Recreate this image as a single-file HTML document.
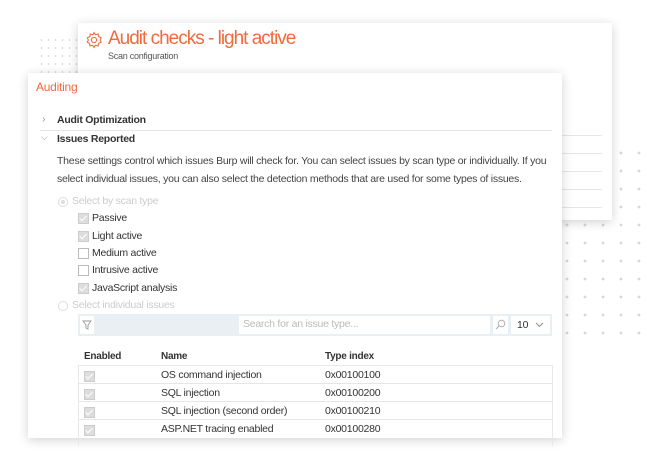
<!DOCTYPE html>
<html><head><style>
body{margin:0;width:653px;height:463px;background:#fff;position:relative;overflow:hidden;font-family:"Liberation Sans",sans-serif;color:#333}
.a{position:absolute}
.dots{position:absolute;background-image:radial-gradient(circle,#d8d8d8 1.2px,transparent 1.6px)}
.card{position:absolute;background:#fff;box-shadow:0 2px 10px rgba(0,0,0,.18)}
.t{position:absolute;font-size:10.5px;letter-spacing:-.25px;white-space:nowrap}
.cb{position:absolute;width:9px;height:9px;border:1px solid #bbb;background:#fff}
.cb.on{background:#ddd;border-color:#ccc}
.cb.on::after{content:"";position:absolute;left:2px;top:0px;width:3px;height:6px;border:solid #fff;border-width:0 1.5px 1.5px 0;transform:rotate(45deg)}
.hl{position:absolute;height:1px;background:#e6e6e6}
</style></head><body>
<div class="dots" style="left:38px;top:36px;width:40px;height:56px;background-size:7px 8px;background-image:radial-gradient(circle,#d4d4d4 .6px,transparent 1px)"></div>
<div class="dots" style="left:558px;top:144px;width:95px;height:195px;background-size:18px 18px"></div>
<div class="card" style="left:78px;top:23px;width:534px;height:197px">
 <svg class="a" style="left:7px;top:8px" width="18" height="18" viewBox="0 0 24 24" fill="none" stroke="#f06a3b" stroke-width="1.4"><circle cx="12" cy="12" r="3.5"/><path d="M12 2l2 3 3.5-1 .5 3.5 3.5 1.5-1.5 3 1.5 3-3.5 1.5-.5 3.5-3.5-1-2 3-2-3-3.5 1-.5-3.5L3 15l1.5-3L3 9l3.5-1.5L7 4l3.5 1z"/></svg>
 <div class="t" style="left:30px;top:5px;font-size:19px;color:#f06a3b;letter-spacing:-1px">Audit checks - light active</div>
 <div class="t" style="left:30px;top:28px;font-size:9px;color:#555">Scan configuration</div>
 <div class="hl" style="left:484px;width:40px;top:112px"></div>
 <div class="hl" style="left:484px;width:40px;top:130px"></div>
 <div class="hl" style="left:484px;width:40px;top:148px"></div>
 <div class="hl" style="left:484px;width:40px;top:166px"></div>
 <div class="hl" style="left:484px;width:40px;top:184px"></div>
</div>
<div class="card" style="left:28px;top:73px;width:534px;height:365px">
 <div class="t" style="left:8px;top:7px;font-size:12px;color:#f06a3b">Auditing</div>
 <div class="t" style="left:14px;top:40px;color:#999">›</div>
 <div class="t" style="left:29px;top:41px;font-weight:bold;color:#333">Audit Optimization</div>
 <div class="hl" style="left:12px;width:512px;top:57px"></div>
 <div class="t" style="left:13px;top:59px;color:#999;font-size:9px">⌵</div>
 <div class="t" style="left:29px;top:60px;font-weight:bold;color:#333">Issues Reported</div>
 <div class="t" style="left:29px;top:82px;color:#444">These settings control which issues Burp will check for. You can select issues by scan type or individually. If you</div>
 <div class="t" style="left:29px;top:100px;color:#444">select individual issues, you can also select the detection methods that are used for some types of issues.</div>
 <div class="a" style="left:30px;top:124px;width:8px;height:8px;border:1px solid #ddd;border-radius:50%"><div class="a" style="left:2px;top:2px;width:4px;height:4px;border-radius:50%;background:#ddd"></div></div>
 <div class="t" style="left:44px;top:122px;color:#ccc">Select by scan type</div>
 <div class="cb on" style="left:50px;top:140px"></div><div class="t" style="left:64px;top:139px">Passive</div>
 <div class="cb on" style="left:50px;top:158px"></div><div class="t" style="left:64px;top:157px">Light active</div>
 <div class="cb" style="left:50px;top:175px"></div><div class="t" style="left:64px;top:174px">Medium active</div>
 <div class="cb" style="left:50px;top:192px"></div><div class="t" style="left:64px;top:191px">Intrusive active</div>
 <div class="cb on" style="left:50px;top:210px"></div><div class="t" style="left:64px;top:209px">JavaScript analysis</div>
 <div class="a" style="left:30px;top:228px;width:8px;height:8px;border:1px solid #ddd;border-radius:50%"></div>
 <div class="t" style="left:44px;top:226px;color:#ccc">Select individual issues</div>
 <div class="a" style="left:50px;top:241px;width:474px;height:22px;background:#eaeff3"></div>
 <div class="a" style="left:52px;top:243px;width:14px;height:18px;background:#fff"></div>
 <svg class="a" style="left:54px;top:247px" width="10" height="10" viewBox="0 0 10 10" fill="none" stroke="#999" stroke-width="0.9"><path d="M1 1h8L6 5v4L4 8V5z"/></svg>
 <div class="a" style="left:211px;top:243px;width:251px;height:18px;background:#fff"></div>
 <div class="t" style="left:215px;top:245px;color:#bbb">Search for an issue type...</div>
 <div class="a" style="left:465px;top:243px;width:15px;height:18px;background:#fff"></div>
 <svg class="a" style="left:467px;top:246px" width="11" height="11" viewBox="0 0 11 11" fill="none" stroke="#aaa" stroke-width="0.9"><circle cx="6.5" cy="4.5" r="3.3"/><path d="M4.2 6.8L1 10"/></svg>
 <div class="a" style="left:483px;top:243px;width:39px;height:18px;background:#fff"></div>
 <div class="t" style="left:489px;top:246px">10</div>
 <svg class="a" style="left:507px;top:249px" width="9" height="6" viewBox="0 0 9 6" fill="none" stroke="#888" stroke-width="0.9"><path d="M1 1l3.5 3.5L8 1"/></svg>
 <div class="t" style="left:56px;top:278px;font-weight:bold;font-size:10px">Enabled</div>
 <div class="t" style="left:133px;top:278px;font-weight:bold;font-size:10px">Name</div>
 <div class="t" style="left:297px;top:278px;font-weight:bold;font-size:10px">Type index</div>
 <div class="a" style="left:50px;top:292px;width:473px;height:80px;border:1px solid #e8e8e8;border-bottom:none"></div>
 <div class="hl" style="left:50px;width:474px;top:310px"></div>
 <div class="hl" style="left:50px;width:474px;top:328px"></div>
 <div class="hl" style="left:50px;width:474px;top:346px"></div>
 <div class="cb on" style="left:56px;top:298px"></div><div class="t" style="left:133px;top:296px">OS command injection</div><div class="t" style="left:297px;top:296px">0x00100100</div>
 <div class="cb on" style="left:56px;top:316px"></div><div class="t" style="left:133px;top:314px">SQL injection</div><div class="t" style="left:297px;top:314px">0x00100200</div>
 <div class="cb on" style="left:56px;top:334px"></div><div class="t" style="left:133px;top:332px">SQL injection (second order)</div><div class="t" style="left:297px;top:332px">0x00100210</div>
 <div class="cb on" style="left:56px;top:352px"></div><div class="t" style="left:133px;top:350px">ASP.NET tracing enabled</div><div class="t" style="left:297px;top:350px">0x00100280</div>
</div>
</body></html>
